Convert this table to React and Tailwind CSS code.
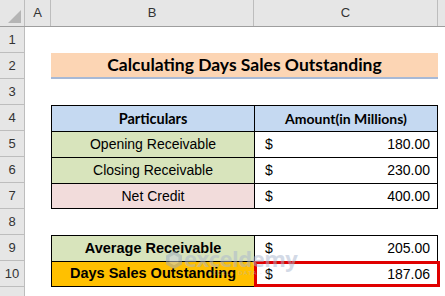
import React from "react";

const calibri = { fontFamily: "Lato, 'Open Sans', sans-serif" };
const arial = { fontFamily: "'Liberation Sans', Arial, sans-serif" };

function RowHead({ n, h = "h-[26px]" }) {
  return (
    <div className={`w-[25px] ${h} shrink-0 bg-[#e6e6e6] border-b border-r border-[#bdbdbd] flex items-center justify-center text-[13px] text-[#333]`} style={arial}>
      {n}
    </div>
  );
}

function Row({ n, children }) {
  return (
    <div className="flex h-[26px]">
      <RowHead n={n} />
      <div className="w-[26px] shrink-0" />
      {children}
    </div>
  );
}

function Money({ v, extraClass = "", overlay = null }) {
  return (
    <div className={`relative w-[184px] shrink-0 h-full border-l border-r border-t border-black bg-white flex items-center justify-between pl-[10px] pr-[7px] text-[14px] ${extraClass}`} style={arial}>
      <span>$</span>
      <span>{v}</span>
      {overlay}
    </div>
  );
}

export default function App() {
  return (
    <div className="w-[445px] h-[296px] bg-white overflow-hidden relative text-black">
      {/* column headers */}
      <div className="flex h-[27px] bg-[#e6e6e6] border-b border-[#9e9e9e] text-[13px] text-[#333]" style={arial}>
        <div className="w-[25px] shrink-0 border-r border-[#bdbdbd] relative">
          <svg className="absolute right-[3px] bottom-[3px]" width="13" height="13" viewBox="0 0 13 13">
            <polygon points="13,0 13,13 0,13" fill="#b5b5b5" />
          </svg>
        </div>
        <div className="w-[26px] shrink-0 border-r border-[#bdbdbd] flex items-center justify-center">A</div>
        <div className="w-[203px] shrink-0 border-r border-[#bdbdbd] flex items-center justify-center">B</div>
        <div className="w-[184px] shrink-0 border-r border-[#bdbdbd] flex items-center justify-center">C</div>
        <div className="flex-1" />
      </div>

      <Row n="1" />
      <Row n="2">
        <div className="w-[387px] shrink-0 h-full bg-[#fcd5b4] border-b-2 border-[#a7b9d6] flex items-center justify-center font-bold text-[17.5px]" style={calibri}>
          Calculating Days Sales Outstanding
        </div>
      </Row>
      <Row n="3" />
      <Row n="4">
        <div className="w-[203px] shrink-0 h-full bg-[#c5d9f1] border-l border-t border-black flex items-center justify-center font-bold text-[14.5px]" style={calibri}>
          Particulars
        </div>
        <div className="w-[184px] shrink-0 h-full bg-[#c5d9f1] border-l border-r border-t border-black flex items-center justify-center font-bold text-[14px]" style={calibri}>
          Amount(in Millions)
        </div>
      </Row>
      <Row n="5">
        <div className="w-[203px] shrink-0 h-full bg-[#d8e4bc] border-l border-t border-black flex items-center justify-center text-[14px]" style={arial}>
          Opening Receivable
        </div>
        <Money v="180.00" />
      </Row>
      <Row n="6">
        <div className="w-[203px] shrink-0 h-full bg-[#d8e4bc] border-l border-t border-black flex items-center justify-center text-[14px]" style={arial}>
          Closing Receivable
        </div>
        <Money v="230.00" />
      </Row>
      <Row n="7">
        <div className="w-[203px] shrink-0 h-full bg-[#f2dcdb] border-l border-t border-b border-black flex items-center justify-center text-[14px]" style={arial}>
          Net Credit
        </div>
        <Money v="400.00" extraClass="border-b" />
      </Row>
      <Row n="8" />
      <Row n="9">
        <div className="w-[203px] shrink-0 h-full bg-[#d8e4bc] border-l border-t border-black flex items-center justify-center font-bold text-[14.5px]" style={arial}>
          Average Receivable
        </div>
        <Money v="205.00" />
      </Row>
      <Row n="10">
        <div className="w-[203px] shrink-0 h-full bg-[#ffc000] border-l border-t border-b border-black flex items-center justify-center font-bold text-[14.5px]" style={arial}>
          Days Sales Outstanding
        </div>
        <Money
          v="187.06"
          extraClass="border-b"
          overlay={<div className="absolute -left-[1px] -top-[1px] -right-[3px] -bottom-[1px] border-[3px] border-[#e00000]" />}
        />
      </Row>
      <div className="flex">
        <RowHead n="" h="h-[20px]" />
      </div>

      {/* watermark */}
      <div className="absolute left-[166px] top-[247px] flex items-start gap-[2px] pointer-events-none opacity-50">
        <svg width="16" height="18" viewBox="0 0 18 20" className="mt-[4px]">
          <polygon points="9,0 18,5 18,15 9,20 0,15 0,5" fill="#9aa9c4" />
          <polygon points="9,4 14,7 14,13 9,16 4,13 4,7" fill="#c9d2e3" />
        </svg>
        <div className="flex flex-col items-center leading-none">
          <span className="text-[22px] font-bold text-[#a9b6cf] tracking-[-0.5px]" style={{ fontFamily: "'Open Sans', sans-serif" }}>exceldemy</span>
          <span className="text-[6px] text-[#a9b6cf] tracking-[1px] mt-[1px]" style={{ fontFamily: "'Open Sans', sans-serif" }}>EXCEL · DATA · BI</span>
        </div>
      </div>
    </div>
  );
}
